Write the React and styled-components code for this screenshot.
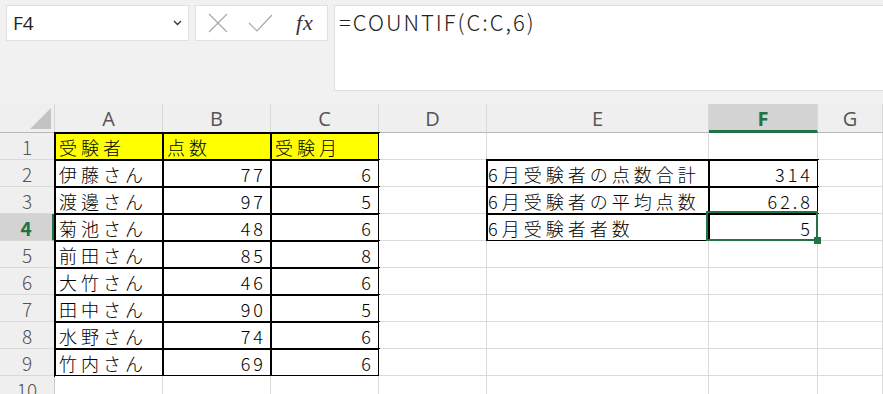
import styled, { createGlobalStyle } from "styled-components";

const GREEN = "#217346";
const JP = `"Noto Sans CJK JP", "Noto Sans", sans-serif`;
const UI = `"Open Sans", "Liberation Sans", sans-serif`;

const GlobalStyle = createGlobalStyle`
  html, body {
    margin: 0;
    padding: 0;
    background: #f1f1f1;
    overflow: hidden;
  }
  body {
    width: 883px;
    height: 394px;
    font-family: ${JP};
  }
`;

const columns = ["A", "B", "C", "D", "E", "F", "G"];

const people = [
  ["伊藤さん", 77, 6],
  ["渡邊さん", 97, 5],
  ["菊池さん", 48, 6],
  ["前田さん", 85, 8],
  ["大竹さん", 46, 6],
  ["田中さん", 90, 5],
  ["水野さん", 74, 6],
  ["竹内さん", 69, 6],
];

const summary = [
  ["6月受験者の点数合計", "314"],
  ["6月受験者の平均点数", "62.8"],
  ["6月受験者者数", "5"],
];

const empty = {};

function rowCells(n) {
  if (n === 1) {
    return [
      { text: "受験者", fill: true, boxed: true },
      { text: "点数", fill: true, boxed: true },
      { text: "受験月", fill: true, boxed: true },
      empty, empty, empty, empty,
    ];
  }
  const p = people[n - 2];
  const s = summary[n - 2];
  if (!p) return columns.map(() => empty);
  return [
    { text: p[0], boxed: true },
    { text: String(p[1]), right: true, boxed: true },
    { text: String(p[2]), right: true, boxed: true },
    empty,
    s ? { text: s[0], boxed: true } : empty,
    s ? { text: s[1], right: true, boxed: true, selected: n === 4 } : empty,
    empty,
  ];
}

function App() {
  const rowNums = [1, 2, 3, 4, 5, 6, 7, 8, 9, 10];
  return (
    <>
      <GlobalStyle />
      <Page>
        <TopBar>
          <NameBox>
            <span>F4</span>
            <svg width="9" height="6" viewBox="0 0 9 6">
              <path d="M1 1 L4.5 4.5 L8 1" fill="none" stroke="#333" strokeWidth="1.3" />
            </svg>
          </NameBox>
          <FxBox>
            <svg width="20" height="20" viewBox="0 0 20 20">
              <path d="M1 1 L19 19 M19 1 L1 19" stroke="#a8a8a8" strokeWidth="1.2" fill="none" />
            </svg>
            <svg width="25" height="18" viewBox="0 0 25 18">
              <path d="M1 9 L9 17 L24 1" stroke="#a8a8a8" strokeWidth="1.2" fill="none" />
            </svg>
            <FxLabel>fx</FxLabel>
          </FxBox>
          <FormulaBar>=COUNTIF(C:C,6)</FormulaBar>
        </TopBar>

        <Sheet>
          <Corner>
            <svg width="21" height="21" viewBox="0 0 21 21">
              <polygon points="21,0 21,21 0,21" fill="#c3c3c3" />
            </svg>
          </Corner>
          {columns.map((c) => (
            <ColHeader key={c} $active={c === "F"}>
              {c}
            </ColHeader>
          ))}

          {rowNums.map((n) => (
            <Row key={n} n={n} />
          ))}
        </Sheet>
      </Page>
    </>
  );
}

function Row({ n }) {
  return (
    <>
      <RowHeader $active={n === 4}>{n}</RowHeader>
      {rowCells(n).map((cell, i) => (
        <Cell
          key={columns[i]}
          $right={cell.right}
          $fill={cell.fill}
          $boxed={cell.boxed}
          $wide={columns[i] === "E"}
        >
          {cell.text}
          {cell.selected && (
            <>
              <Selection />
              <FillHandle />
            </>
          )}
        </Cell>
      ))}
    </>
  );
}

//--styles--
const Page = styled.div`
  width: 883px;
  height: 394px;
  overflow: hidden;
  background: #f1f1f1;
`;

const TopBar = styled.div`
  height: 104px;
  box-sizing: border-box;
  display: flex;
  align-items: flex-start;
  gap: 6px;
  padding: 5px 0 0 6px;
`;

const NameBox = styled.div`
  width: 183px;
  height: 36px;
  box-sizing: border-box;
  background: #fff;
  border: 1px solid #e0e0e0;
  display: flex;
  align-items: center;
  justify-content: space-between;
  padding: 0 6px 0 6px;
  font-family: ${UI};
  font-size: 19px;
  color: #222;
`;

const FxBox = styled.div`
  width: 133px;
  height: 36px;
  box-sizing: border-box;
  background: #fff;
  border: 1px solid #e0e0e0;
  display: flex;
  align-items: center;
  gap: 20px;
  padding-left: 12px;
`;

const FxLabel = styled.span`
  font-family: "Liberation Serif", serif;
  font-style: italic;
  font-size: 22px;
  color: #333;
  margin-left: 3px;
  letter-spacing: 1px;
`;

const FormulaBar = styled.div`
  flex: 1;
  height: 86px;
  box-sizing: border-box;
  background: #fff;
  border: 1px solid #e0e0e0;
  border-right: none;
  padding: 0 0 0 4px;
  font-family: ${JP};
  font-size: 22px;
  font-weight: 300;
  line-height: 30px;
  letter-spacing: 2px;
  color: #222;
`;

const Sheet = styled.div`
  display: grid;
  grid-template-columns: 55px 108px 108px 108px 108px 222px 109px 1fr;
  grid-template-rows: 29px repeat(10, 27px);
  background: #fff;
`;

const Corner = styled.div`
  background: #efefef;
  border-right: 1px solid #d6d6d6;
  border-bottom: 1px solid #b7b7b7;
  display: flex;
  justify-content: flex-end;
  align-items: flex-end;
  padding: 0 3px 3px 0;
`;

const ColHeader = styled.div`
  box-sizing: border-box;
  background: ${(p) => (p.$active ? "#d3d3d3" : "#efefef")};
  border-right: 1px solid #d8d8d8;
  border-bottom: ${(p) => (p.$active ? `3px solid ${GREEN}` : "1px solid #b7b7b7")};
  display: flex;
  align-items: center;
  justify-content: center;
  padding-top: ${(p) => (p.$active ? "2px" : "0")};
  font-family: ${UI};
  font-size: 20px;
  font-weight: ${(p) => (p.$active ? 700 : 400)};
  color: ${(p) => (p.$active ? GREEN : "#555")};
`;

const RowHeader = styled.div`
  box-sizing: border-box;
  background: ${(p) => (p.$active ? "#d3d3d3" : "#efefef")};
  border-right: ${(p) => (p.$active ? `3px solid ${GREEN}` : "1px solid #c9c9c9")};
  border-bottom: 1px solid #d8d8d8;
  display: flex;
  align-items: center;
  justify-content: center;
  font-family: ${JP};
  font-size: 19px;
  font-weight: ${(p) => (p.$active ? 700 : 300)};
  color: ${(p) => (p.$active ? GREEN : "#555")};
`;

const Cell = styled.div`
  position: relative;
  box-sizing: border-box;
  background: ${(p) => (p.$fill ? "#ffff00" : "#fff")};
  border-right: 1px solid #dadada;
  border-bottom: 1px solid #dadada;
  outline: ${(p) => (p.$boxed ? "2px solid #000" : "none")};
  outline-offset: -1px;
  display: flex;
  align-items: center;
  justify-content: ${(p) => (p.$right ? "flex-end" : "flex-start")};
  padding: 2px ${(p) => (p.$right ? "4px" : "0")} 0 ${(p) => (p.$wide ? "1px" : "4px")};
  font-family: ${JP};
  font-size: 18px;
  font-weight: 300;
  letter-spacing: ${(p) => (p.$right ? "3px" : "4px")};
  color: #000;
  white-space: nowrap;
`;

const Selection = styled.span`
  position: absolute;
  top: -3px;
  left: -3px;
  right: -1px;
  bottom: -1px;
  border: 2px solid ${GREEN};
  z-index: 2;
`;

const FillHandle = styled.span`
  position: absolute;
  right: -4px;
  bottom: -4px;
  width: 7px;
  height: 7px;
  background: ${GREEN};
  z-index: 3;
`;

export default App;
